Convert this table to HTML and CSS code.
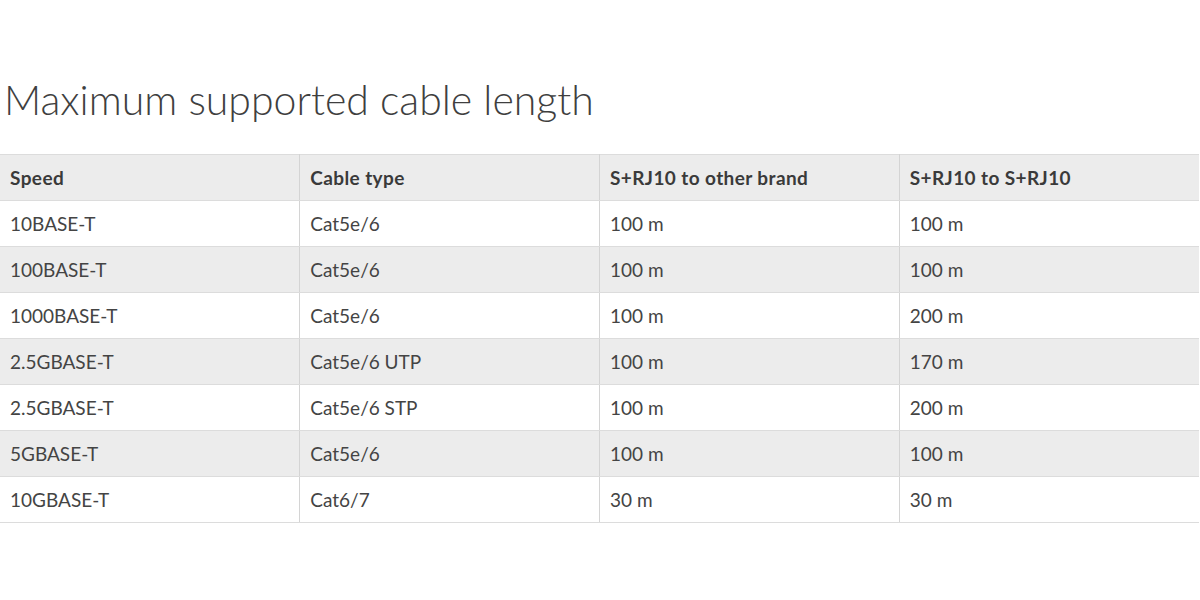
FILE: index.html
```html
<!DOCTYPE html>
<html>
<head>
<meta charset="utf-8">
<link rel="stylesheet" href="styles.css">
</head>
<body>
<div class="page">
  <h1 class="title">Maximum supported cable length</h1>
  <table class="spec">
    <thead>
      <tr><th>Speed</th><th>Cable type</th><th>S+RJ10 to other brand</th><th>S+RJ10 to S+RJ10</th></tr>
    </thead>
    <tbody>
      <tr><td>10BASE-T</td><td>Cat5e/6</td><td>100 m</td><td>100 m</td></tr>
      <tr><td>100BASE-T</td><td>Cat5e/6</td><td>100 m</td><td>100 m</td></tr>
      <tr><td>1000BASE-T</td><td>Cat5e/6</td><td>100 m</td><td>200 m</td></tr>
      <tr><td>2.5GBASE-T</td><td>Cat5e/6 UTP</td><td>100 m</td><td>170 m</td></tr>
      <tr><td>2.5GBASE-T</td><td>Cat5e/6 STP</td><td>100 m</td><td>200 m</td></tr>
      <tr><td>5GBASE-T</td><td>Cat5e/6</td><td>100 m</td><td>100 m</td></tr>
      <tr><td>10GBASE-T</td><td>Cat6/7</td><td>30 m</td><td>30 m</td></tr>
    </tbody>
  </table>
</div>
</body>
</html>
```
FILE: styles.css
```css
html, body {
  margin: 0;
  padding: 0;
  background: #fff;
}
.page {
  padding-top: 76px;
  font-family: Lato, "Liberation Sans", sans-serif;
  color: #444;
}
.title {
  margin: 0 0 0 4px;
  font-weight: 300;
  font-size: 41px;
  line-height: 48px;
  color: #3f3f3f;
  letter-spacing: 0;
}
.spec {
  margin-top: 30px;
  width: 1199px;
  border-collapse: collapse;
  table-layout: fixed;
  font-size: 19px;
}
.spec th, .spec td {
  height: 45px;
  padding: 0 10px;
  text-align: left;
  border: 1px solid #dcdcdc;
  border-left: none;
  border-right: 1px solid #d4d4d4;
}
.spec th:last-child, .spec td:last-child {
  border-right: none;
}
.spec th {
  font-weight: 700;
  letter-spacing: 0.4px;
  background: #ececec;
  color: #3a3a3a;
}
.spec td {
  font-weight: 400;
}
.spec tbody tr:nth-child(even) td {
  background: #ececec;
}
```
